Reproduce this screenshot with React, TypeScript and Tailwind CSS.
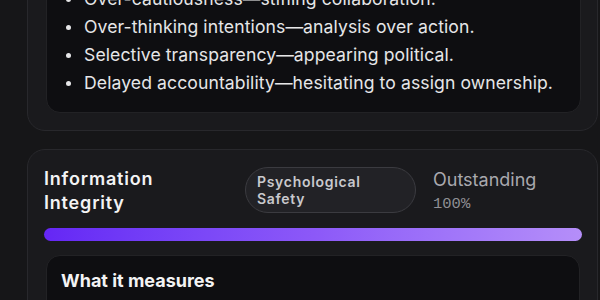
import React from "react";

const lowSigns = [
  "Over-cautiousness—stifling collaboration.",
  "Over-thinking intentions—analysis over action.",
  "Selective transparency—appearing political.",
  "Delayed accountability—hesitating to assign ownership.",
];

export default function App() {
  return (
    <div className="min-h-screen overflow-hidden bg-[#161618] font-['Inter',sans-serif] antialiased">
      <div className="-mt-[49px] flex flex-col gap-[18px] pl-[27px] pr-[2px]">
        {/* Previous dimension (scrolled) */}
        <div className="rounded-[18px] border border-[#28282c] bg-[#1a1a1d] pt-[18px] pb-[17px] pl-[18px] pr-[16px]">
          <div className="rounded-[14px] border border-[#222225] bg-[#0e0e11] pt-[14px] pb-[15px] pl-[19px] pr-4">
            <ul className="flex flex-col">
              {lowSigns.map((item) => (
                <li key={item} className="flex items-center gap-[13px] text-[17.6px] leading-[28px] tracking-[0.005em] text-[#e6e6e8]">
                  <span className="h-[5px] w-[5px] shrink-0 rounded-full bg-[#e6e6e8]" />
                  <span className="whitespace-nowrap">{item}</span>
                </li>
              ))}
            </ul>
          </div>
        </div>

        {/* Information Integrity */}
        <div className="rounded-[18px] border border-[#28282c] bg-[#1a1a1d] pt-[17px] pb-6 pl-[16px] pr-[15px]">
          <div className="flex items-start">
            <h3 className="w-[201px] shrink-0 text-[18px] leading-6 font-semibold tracking-[0.045em] text-[#f3f3f4]">
              Information
              <br />
              Integrity
            </h3>
            <div className="flex h-[46px] w-[171px] shrink-0 flex-col justify-center rounded-full border border-[#3b3b40] bg-[#222226] pl-[11px]">
              <span className="text-[14px] leading-[17px] font-semibold tracking-[0.05em] text-[#c9c9cd]">
                Psychological
                <br />
                Safety
              </span>
            </div>
            <div className="ml-[17px] mt-[1px] flex flex-col">
              <span className="text-[18px] leading-6 text-[#a9a9ae]">Outstanding</span>
              <span className="mt-[2px] font-['Liberation_Mono',monospace] text-[15.5px] leading-5 text-[#8f8f94]">
                100%
              </span>
            </div>
          </div>

          <div className="mt-[13px] h-[13px] w-full rounded-full bg-gradient-to-r from-[#6526f5] via-[#8c58f8] to-[#b58ef9]" />

          <div className="mx-[2px] mt-[14px] h-[60px] rounded-[14px] border border-[#222225] bg-[#0e0e11] pt-[13px] pl-[14px] pr-4">
            <h4 className="text-[18px] leading-6 font-bold text-[#f3f3f4]">What it measures</h4>
          </div>
        </div>
      </div>
    </div>
  );
}
